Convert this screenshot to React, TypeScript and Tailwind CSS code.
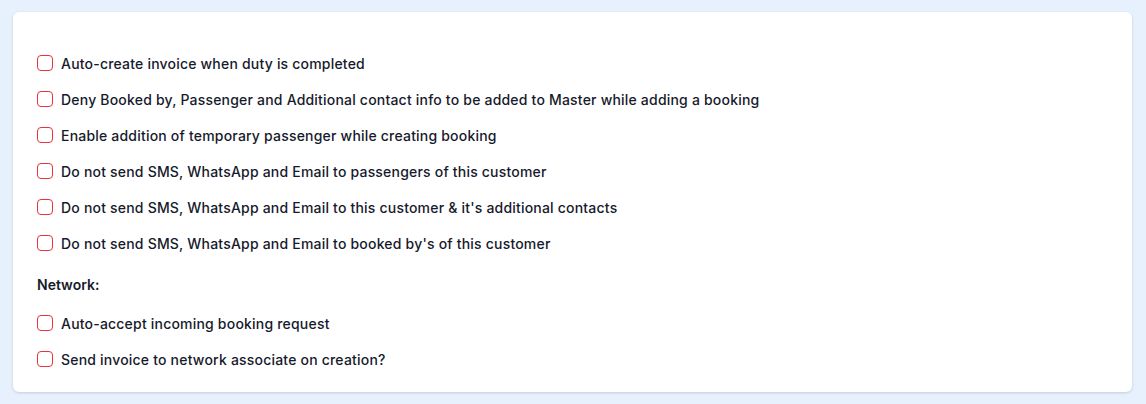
const GENERAL = [
  "Auto-create invoice when duty is completed",
  "Deny Booked by, Passenger and Additional contact info to be added to Master while adding a booking",
  "Enable addition of temporary passenger while creating booking",
  "Do not send SMS, WhatsApp and Email to passengers of this customer",
  "Do not send SMS, WhatsApp and Email to this customer & it's additional contacts",
  "Do not send SMS, WhatsApp and Email to booked by's of this customer",
];

const NETWORK = [
  "Auto-accept incoming booking request",
  "Send invoice to network associate on creation?",
];

function CheckRow({ label }: { label: string }) {
  return (
    <label className="flex h-9 items-center gap-2 text-[14px] font-medium tracking-[0.2px] text-[#161a2b]">
      <input
        type="checkbox"
        className="h-4 w-4 shrink-0 appearance-none rounded-[4px] border-[1.5px] border-[#e8323c] bg-white"
      />
      {label}
    </label>
  );
}

export default function App() {
  return (
    <div
      className="min-h-[404px] bg-[#e6f1fd] px-[13px] pt-3"
      style={{ fontFamily: "Inter, sans-serif" }}
    >
      <div className="h-[380px] w-[1119px] rounded-md bg-white px-6 pt-[33px] shadow-[0_1px_3px_rgba(0,0,0,0.15)]">
        {GENERAL.map((l) => (
          <CheckRow key={l} label={l} />
        ))}
        <div className="flex h-[44px] items-center pt-[2px] text-[14px] font-semibold text-[#161a2b]">
          Network:
        </div>
        {NETWORK.map((l) => (
          <CheckRow key={l} label={l} />
        ))}
      </div>
    </div>
  );
}
